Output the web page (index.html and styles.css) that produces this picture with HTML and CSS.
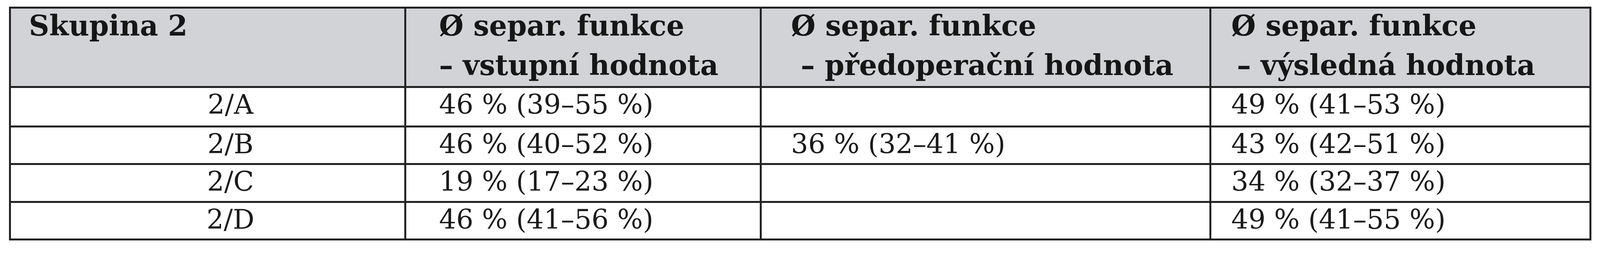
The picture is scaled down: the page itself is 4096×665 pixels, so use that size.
FILE: index.html
```html
<!DOCTYPE html>
<html lang="cs">
<head>
<meta charset="utf-8">
<title>Skupina 2 – separační funkce</title>
<link rel="stylesheet" href="styles.css">
</head>
<body>
<div class="tbl" role="table">
  <div class="cell hd col1" role="columnheader"><div class="hd-text">Skupina 2</div></div>
  <div class="cell hd col2" role="columnheader"><div class="hd-text">Ø separ. funkce<br>– vstupní hodnota</div></div>
  <div class="cell hd col3" role="columnheader"><div class="hd-text">Ø separ. funkce<br>&nbsp;– předoperační hodnota</div></div>
  <div class="cell hd col4" role="columnheader"><div class="hd-text">Ø separ. funkce<br>&#8201;– výsledná hodnota</div></div>

  <div class="cell grp" role="cell">2/A</div>
  <div class="cell col2" role="cell">46 % (39–55 %)</div>
  <div class="cell col3" role="cell"></div>
  <div class="cell col4" role="cell">49 % (41–53 %)</div>

  <div class="cell grp" role="cell">2/B</div>
  <div class="cell col2" role="cell">46 % (40–52 %)</div>
  <div class="cell col3" role="cell">36 % (32–41 %)</div>
  <div class="cell col4" role="cell">43 % (42–51 %)</div>

  <div class="cell grp" role="cell">2/C</div>
  <div class="cell col2" role="cell">19 % (17–23 %)</div>
  <div class="cell col3" role="cell"></div>
  <div class="cell col4" role="cell">34 % (32–37 %)</div>

  <div class="cell grp" role="cell">2/D</div>
  <div class="cell col2" role="cell">46 % (41–56 %)</div>
  <div class="cell col3" role="cell"></div>
  <div class="cell col4" role="cell">49 % (41–55 %)</div>
</div>
</body>
</html>
```

FILE: styles.css
```css
html, body {
  margin: 0;
  padding: 0;
  background: #ffffff;
}

body {
  font-family: "DejaVu Serif", "Liberation Serif", serif;
  color: #1a1a1a;
}

.tbl {
  display: grid;
  grid-template-columns: 1012px 910px 1151px 973px;
  grid-template-rows: 203px 101px 96px 97px 96px;
  width: 4051px;
  box-sizing: border-box;
  margin: 17px 0 0 23px;
  border-top: 5px solid #222222;
  border-left: 5px solid #222222;
}

.cell {
  box-sizing: border-box;
  border-right: 5px solid #222222;
  border-bottom: 5px solid #222222;
  font-size: 69px;
  line-height: 80px;
  padding-top: 2px;
  white-space: nowrap;
  overflow: hidden;
}

.hd {
  background: #d1d3d6;
  font-weight: bold;
  font-size: 72px;
  line-height: 101px;
  padding-top: 0;
  color: #161616;
}

.hd-text {
  margin-top: -7px;
}

.hd.col1 {
  padding-left: 46px;
}

.grp {
  text-align: center;
  padding-left: 117px;
}

.col2 {
  padding-left: 84px;
}

.col3 {
  padding-left: 75px;
}

.col4 {
  padding-left: 51px;
}
```
